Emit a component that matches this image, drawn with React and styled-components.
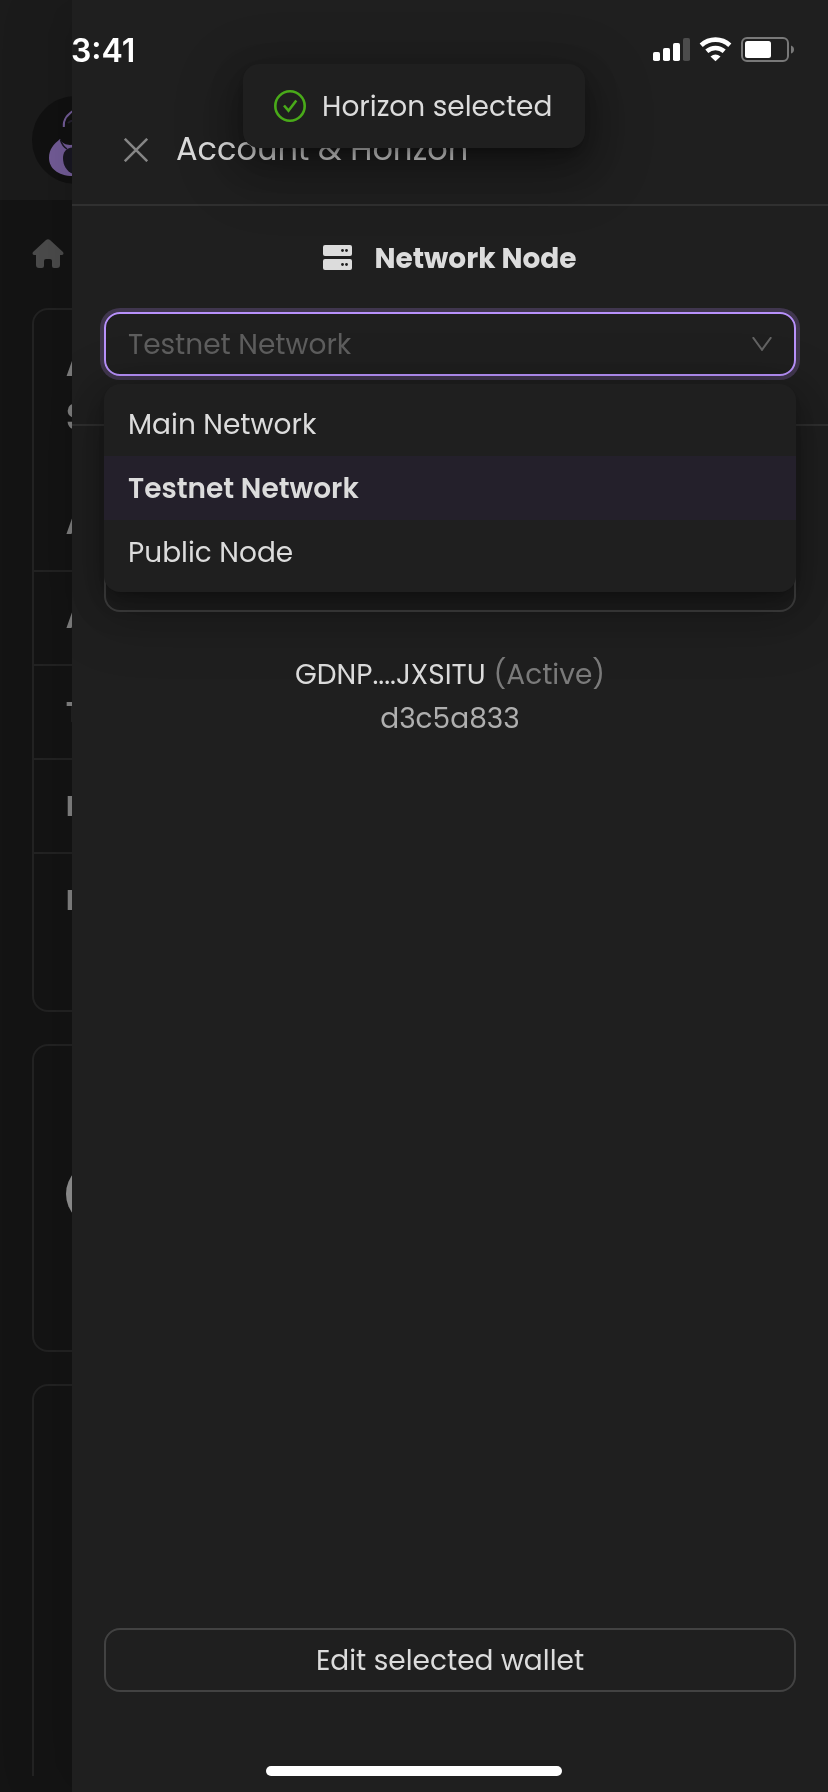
import React from "react";
import styled, { createGlobalStyle } from "styled-components";

const Global = createGlobalStyle`
  * { box-sizing: border-box; }
  html, body { margin: 0; padding: 0; background: #141414; }
  body {
    font-family: Poppins, Inter, "Liberation Sans", sans-serif;
    font-size: 28px;
    line-height: 44px;
    color: #dcdcdc;
  }
  svg { display: block; flex: none; }
`;

const Screen = styled.div`
  position: relative;
  width: 828px;
  height: 1792px;
  overflow: hidden;
  background: #141414;
`;

/* Page behind the drawer */
const Page = styled.main`
  display: flex;
  flex-direction: column;
  height: 1776px;
  overflow: hidden;
  will-change: opacity;
`;
const PageHeader = styled.header`
  flex: none;
  height: 200px;
  padding: 96px 32px 0;
  background: #1b1b1b;
`;
const Crumbs = styled.nav`
  flex: none;
  height: 108px;
  padding: 39px 32px 0;
`;
const Cards = styled.div`
  display: flex;
  flex-direction: column;
  gap: 32px;
  padding: 0 32px;
`;
const Card = styled.section`
  flex: none;
  height: ${(p) => p.$height}px;
  border: 2px solid #232323;
  border-radius: 16px;
  color: #848484;
  font-weight: 700;
`;
const CardRow = styled.div`
  height: ${(p) => p.$height}px;
  padding: ${(p) => p.$top}px 0 0 32px;
  border-bottom: ${(p) => (p.$last ? "0" : "2px solid #232323")};
`;
const CardTitle = styled.div`
  width: 34px;
  margin-bottom: 59px;
  font-size: 38px;
  line-height: 54px;
`;
const Avatar = styled.div`
  width: 64px;
  height: 64px;
  margin: 116px 0 0 32px;
  border-radius: 50%;
  background: #949494;
`;

/* Drawer */
const Drawer = styled.aside`
  position: absolute;
  top: 0;
  right: 0;
  bottom: 0;
  width: 756px;
  display: flex;
  flex-direction: column;
  background: #1f1f1f;
  box-shadow: -12px 0 32px rgba(0, 0, 0, 0.05), -24px 0 56px rgba(0, 0, 0, 0.07);
`;
const DrawerHeader = styled.header`
  display: flex;
  align-items: center;
  gap: 28px;
  height: 206px;
  padding: 96px 52px 0;
  border-bottom: 2px solid #303030;
`;
const DrawerTitle = styled.h1`
  margin: 0 0 2px;
  font-size: 32px;
  font-weight: 400;
  white-space: nowrap;
`;
const DrawerBody = styled.div`
  flex: 1;
  display: flex;
  flex-direction: column;
  padding: 30px 32px 100px;
`;
const SectionHeading = styled.h2`
  display: flex;
  align-items: center;
  justify-content: center;
  gap: 22px;
  height: 44px;
  margin: 0 0 32px;
  font-size: 28px;
  font-weight: 700;
  svg { margin-bottom: 1px; }
`;
const Select = styled.div`
  position: relative;
  height: 64px;
  border: 2px solid #b891fb;
  border-radius: 16px;
  box-shadow: 0 0 0 4px #40364e;
`;
const SelectValue = styled.div`
  display: flex;
  align-items: center;
  justify-content: space-between;
  height: 60px;
  padding: 0 22px;
  color: #5e5e5e;
`;
const Options = styled.ul`
  position: absolute;
  z-index: 2;
  top: 70px;
  left: -2px;
  right: -2px;
  margin: 0;
  padding: 8px 0;
  list-style: none;
  border-radius: 16px;
  background: #1f1f1f;
  box-shadow: 0 12px 32px rgba(0, 0, 0, 0.3), 0 6px 12px -8px rgba(0, 0, 0, 0.45),
    0 18px 56px 16px rgba(0, 0, 0, 0.16);
`;
const Option = styled.li`
  height: 64px;
  padding: 9px 24px;
  background: ${(p) => (p.$selected ? "#24202b" : "transparent")};
  font-weight: ${(p) => (p.$selected ? 600 : 400)};
`;
const Divider = styled.hr`
  width: 756px;
  height: 2px;
  margin: 48px -32px 122px;
  border: 0;
  background: #303030;
`;
const Button = styled.button`
  flex: none;
  height: 64px;
  padding: 0;
  border: 2px solid #424242;
  border-radius: 16px;
  background: transparent;
  color: #dcdcdc;
  font: inherit;
`;
const Account = styled.div`
  display: flex;
  flex-direction: column;
  align-items: center;
  margin: 39px 0 auto;
`;
const Line = styled.div`
  display: flex;
  gap: 8px;
  height: 44px;
  color: ${(p) => p.$color || "#dcdcdc"};
`;
const Label = styled.span`
  display: block;
  padding-top: 2px;
  color: ${(p) => p.$color || "inherit"};
  white-space: nowrap;
`;

/* Overlays */
const Toast = styled.div`
  position: absolute;
  top: 64px;
  left: 243px;
  width: 342px;
  height: 84px;
  display: flex;
  align-items: center;
  gap: 16px;
  padding: 0 31px;
  border-radius: 16px;
  background: #1f1f1f;
  box-shadow: 0 12px 32px rgba(0, 0, 0, 0.32), 0 6px 12px -8px rgba(0, 0, 0, 0.48),
    0 18px 56px 16px rgba(0, 0, 0, 0.2);
`;
const StatusBar = styled.div`
  position: absolute;
  top: 0;
  left: 0;
  right: 0;
  height: 99px;
  display: flex;
  justify-content: space-between;
  align-items: center;
  padding: 0 33px 0 71px;
  color: #fff;
`;
const Clock = styled.span`
  padding-top: 2px;
  font-family: Inter, sans-serif;
  font-size: 32px;
  font-weight: 600;
`;
const HomeIndicator = styled.div`
  position: absolute;
  left: 266px;
  bottom: 16px;
  width: 296px;
  height: 10px;
  border-radius: 5px;
  background: #fff;
`;

const Logo = () => (
  <svg width="88" height="88" viewBox="0 0 88 88">
    <circle cx="44" cy="44" r="44" fill="#111" />
    <path d="M31.800 31C31 24 35 18 44 13" fill="none" stroke="#745d99" strokeWidth="2" />
    <path d="M36 27c2-2 5-3 9-2" fill="none" stroke="#262130" strokeWidth="2" />
    <path d="M28 43C31 49 37 50 44 48V80C26 81 17 72 17 62 17 53 22 48 28 43z" fill="#745d99" />
    <path d="M44 52C35 50 31 56 31 62 31 70 35 75 40 77.500L44 79z" fill="#191722" />
    <path d="M28.500 44C30 49 32 51 35 53" fill="none" stroke="#191722" strokeWidth="1.500" />
  </svg>
);
const HomeIcon = () => (
  <svg width="32" height="30" viewBox="0 0 32 30" fill="#4c4c4c">
    <path d="M14 1Q16-.6 18 1L31 13Q32.300 15.300 30 16h-2v10q0 3-3 3h-3q-2 0-2-2v-5q0-2-2-2h-4q-2 0-2 2v5q0 2-2 2H7q-3 0-3-3V16H2Q-.3 15.300 1 13z" />
  </svg>
);
const CloseIcon = () => (
  <svg width="24" height="24" viewBox="0 0 24 24" stroke="#868686" strokeWidth="2.500">
    <path d="M.8.8l22.400 22.400M23.200.8L.8 23.200" />
  </svg>
);
const ServerIcon = () => (
  <svg width="29" height="25" viewBox="0 0 29 25">
    <rect width="29" height="11" rx="2" fill="#dcdcdc" />
    <rect y="14" width="29" height="11" rx="2" fill="#dcdcdc" />
    <g fill="#1f1f1f">
      <circle cx="19.500" cy="5.500" r="1.400" />
      <circle cx="23.500" cy="5.500" r="1.400" />
      <circle cx="19.500" cy="19.500" r="1.400" />
      <circle cx="23.500" cy="19.500" r="1.400" />
    </g>
  </svg>
);
const ChevronIcon = () => (
  <svg width="20" height="14" viewBox="0 0 20 14" fill="none" stroke="#636363" strokeWidth="2">
    <path d="M.8.2L10 12.800 19.200.2" />
  </svg>
);
const SuccessIcon = () => (
  <svg width="32" height="32" viewBox="0 0 32 32" fill="none" stroke="#49aa19" strokeWidth="2.600">
    <circle cx="16" cy="16" r="14.700" />
    <path d="M10 15.500l4.500 5.200L22.300 10.500" />
  </svg>
);
const StatusIcons = () => (
  <svg width="142" height="26" viewBox="0 0 142 26" fill="#fff">
    <rect x="0" y="15" width="7" height="9" rx="1.800" />
    <rect x="10" y="11" width="7" height="13" rx="1.800" />
    <rect x="20" y="6" width="7" height="18" rx="1.800" />
    <rect x="30" y="1" width="7" height="23" rx="1.800" fill="#4c4c4c" />
    <g fill="none" stroke="#fff" strokeWidth="4.600">
      <path d="M48.200 8.200a21 21 0 0 1 28.600 0" />
      <path d="M53.800 14.200a13.300 13.300 0 0 1 17.400 0" />
    </g>
    <path d="M57.500 19.500q5-4 10 0l-5 4.700z" />
    <rect x="89" y="1" width="46" height="23" rx="5" fill="none" stroke="#797979" strokeWidth="2" />
    <rect x="92" y="4" width="26" height="17" rx="2.500" />
    <path d="M138 8.500q3 1 3 4t-3 4z" fill="#797979" />
  </svg>
);

const rows = [
  { letter: "A", height: 94 },
  { letter: "T", height: 94 },
  { letter: "F", height: 94 },
  { letter: "D", height: 156, last: true },
];
const networks = [
  { name: "Main Network" },
  { name: "Testnet Network", selected: true },
  { name: "Public Node" },
];

export default function App() {
  return (
    <Screen>
      <Global />
      <Page>
        <PageHeader><Logo /></PageHeader>
        <Crumbs><HomeIcon /></Crumbs>
        <Cards>
          <Card $height={704}>
            <CardRow $height={262} $top={26}>
              <CardTitle>A<br />S</CardTitle>
              <div>A</div>
            </CardRow>
            {rows.map((row) => (
              <CardRow key={row.letter} $height={row.height} $top={25} $last={row.last}>{row.letter}</CardRow>
            ))}
          </Card>
          <Card $height={308}><Avatar /></Card>
          <Card $height={500} />
        </Cards>
      </Page>

      <Drawer>
        <DrawerHeader>
          <CloseIcon />
          <DrawerTitle>Account &amp; Horizon</DrawerTitle>
        </DrawerHeader>
        <DrawerBody>
          <SectionHeading><ServerIcon /><Label>Network Node</Label></SectionHeading>
          <Select>
            <SelectValue><Label>Testnet Network</Label><ChevronIcon /></SelectValue>
            <Options>
              {networks.map((n) => (
                <Option key={n.name} $selected={n.selected}><Label>{n.name}</Label></Option>
              ))}
            </Options>
          </Select>
          <Divider />
          <Button aria-label="Wallet" />
          <Account>
            <Line><Label>GDNP....JXSITU</Label><Label $color="#7b7b7b">(Active)</Label></Line>
            <Line $color="#afafaf"><Label>d3c5a833</Label></Line>
          </Account>
          <Button><Label>Edit selected wallet</Label></Button>
        </DrawerBody>
      </Drawer>

      <Toast><SuccessIcon /><Label>Horizon selected</Label></Toast>
      <StatusBar><Clock>3:41</Clock><StatusIcons /></StatusBar>
      <HomeIndicator />
    </Screen>
  );
}
